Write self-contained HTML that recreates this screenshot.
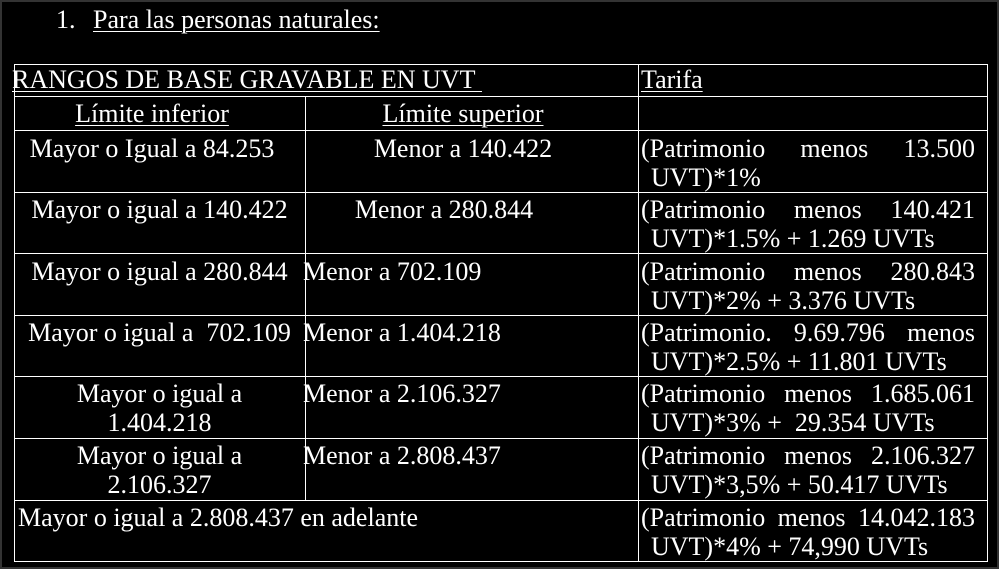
<!DOCTYPE html>
<html><head><meta charset="utf-8"><style>
body{margin:0;width:999px;height:569px;background:#000;overflow:hidden;position:relative;font-family:"Liberation Serif","Times New Roman",serif;font-size:26px;color:#fff;}
.frame{position:absolute;left:0;top:0;width:995px;height:565px;border:2px solid #333;}
.h{position:absolute;height:1px;background:#fff;}
.v{position:absolute;width:1px;background:#fff;}
.t,.j{font-family:"Liberation Serif","Times New Roman",serif;font-size:26px;}
.t{position:absolute;white-space:nowrap;line-height:29px;}
.c{text-align:center;}
u{text-decoration:underline;text-decoration-thickness:1px;text-underline-offset:3px;}
.j{position:absolute;left:641px;width:334px;display:flex;justify-content:space-between;line-height:29px;white-space:nowrap;}
</style></head><body>
<div class="frame"></div>
<div class="t" style="left:56px;top:5px">1.</div>
<div class="t" style="left:93px;top:5px"><u>Para las personas naturales:</u></div>

<div class="h" style="left:14px;top:64px;width:974px"></div>
<div class="h" style="left:14px;top:96px;width:974px"></div>
<div class="h" style="left:14px;top:130px;width:974px"></div>
<div class="h" style="left:14px;top:192px;width:974px"></div>
<div class="h" style="left:14px;top:253px;width:974px"></div>
<div class="h" style="left:14px;top:315px;width:974px"></div>
<div class="h" style="left:14px;top:376px;width:974px"></div>
<div class="h" style="left:14px;top:438px;width:974px"></div>
<div class="h" style="left:14px;top:500px;width:974px"></div>
<div class="h" style="left:14px;top:561px;width:974px"></div>
<div class="v" style="left:14px;top:64px;height:498px"></div>
<div class="v" style="left:987px;top:64px;height:498px"></div>
<div class="v" style="left:638px;top:64px;height:498px"></div>
<div class="v" style="left:305px;top:96px;height:404px"></div>

<div class="t" style="left:12px;top:65px"><u>RANGOS DE BASE GRAVABLE EN UVT&nbsp;</u></div>
<div class="t" style="left:641px;top:65px"><u>Tarifa</u></div>
<div class="t c" style="left:14px;width:276px;top:99px"><u>Límite inferior</u></div>
<div class="t c" style="left:305px;width:316px;top:99px"><u>Límite superior</u></div>

<div class="t c" style="left:14px;width:276px;top:134px">Mayor o Igual a 84.253</div>
<div class="t c" style="left:305px;width:316px;top:134px">Menor a 140.422</div>
<div class="j" style="top:134px"><span>(Patrimonio</span><span>menos</span><span>13.500</span></div>
<div class="t" style="left:651px;top:163px">UVT)*1%</div>

<div class="t c" style="left:14px;width:291px;top:195px">Mayor o igual a 140.422</div>
<div class="t c" style="left:305px;width:278px;top:195px">Menor a 280.844</div>
<div class="j" style="top:195px"><span>(Patrimonio</span><span>menos</span><span>140.421</span></div>
<div class="t" style="left:651px;top:224px">UVT)*1.5% + 1.269 UVTs</div>

<div class="t c" style="left:14px;width:291px;top:257px">Mayor o igual a 280.844</div>
<div class="t" style="left:303px;top:257px">Menor a 702.109</div>
<div class="j" style="top:257px"><span>(Patrimonio</span><span>menos</span><span>280.843</span></div>
<div class="t" style="left:651px;top:286px">UVT)*2% + 3.376 UVTs</div>

<div class="t c" style="left:14px;width:291px;top:318px">Mayor o igual a&nbsp; 702.109</div>
<div class="t" style="left:303px;top:318px">Menor a 1.404.218</div>
<div class="j" style="top:318px"><span>(Patrimonio.</span><span>9.69.796</span><span>menos</span></div>
<div class="t" style="left:651px;top:347px">UVT)*2.5% + 11.801 UVTs</div>

<div class="t c" style="left:14px;width:291px;top:379px">Mayor o igual a<br>1.404.218</div>
<div class="t" style="left:303px;top:379px">Menor a 2.106.327</div>
<div class="j" style="top:379px"><span>(Patrimonio</span><span>menos</span><span>1.685.061</span></div>
<div class="t" style="left:651px;top:408px">UVT)*3% +&nbsp; 29.354 UVTs</div>

<div class="t c" style="left:14px;width:291px;top:441px">Mayor o igual a<br>2.106.327</div>
<div class="t" style="left:303px;top:441px">Menor a 2.808.437</div>
<div class="j" style="top:441px"><span>(Patrimonio</span><span>menos</span><span>2.106.327</span></div>
<div class="t" style="left:651px;top:470px">UVT)*3,5% + 50.417 UVTs</div>

<div class="t" style="left:18px;top:503px">Mayor o igual a 2.808.437 en adelante</div>
<div class="j" style="top:503px"><span>(Patrimonio</span><span>menos</span><span>14.042.183</span></div>
<div class="t" style="left:651px;top:532px">UVT)*4% + 74,990 UVTs</div>
</body></html>
